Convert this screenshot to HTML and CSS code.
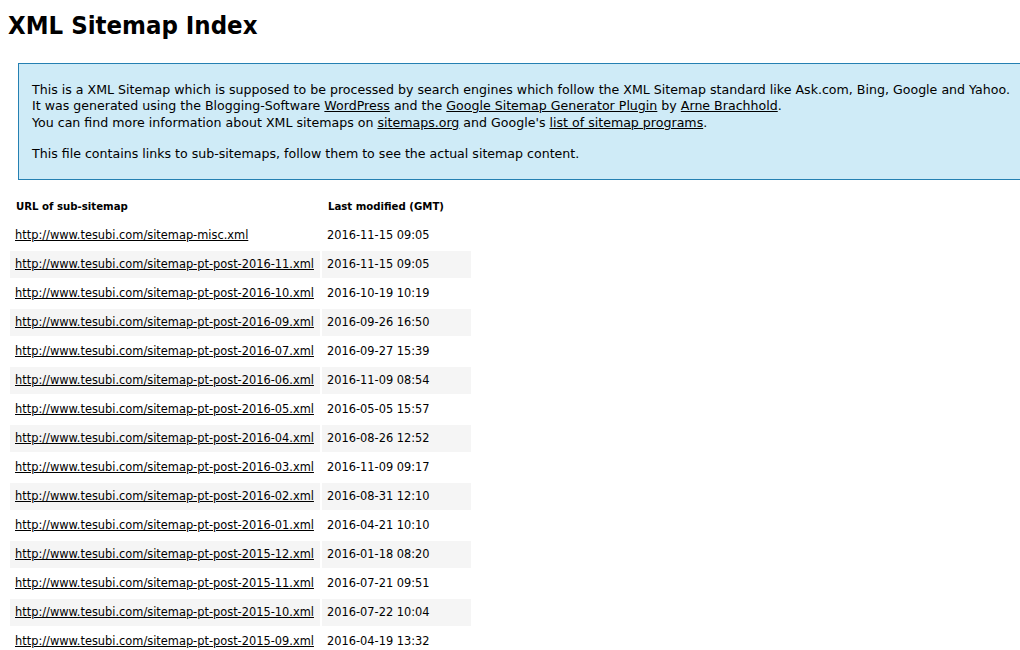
FILE: index.html
```html
<!DOCTYPE html>
<html lang="en">
<head>
  <meta charset="UTF-8" />
  <title>XML Sitemap</title>
  <link rel="stylesheet" href="styles.css">
</head>
<body>
  <h1>XML Sitemap Index</h1>

  <div id="intro">
    <p>
      This is a XML Sitemap which is supposed to be processed by search engines which follow the XML Sitemap standard like Ask.com, Bing, Google and Yahoo.<br />
      It was generated using the Blogging-Software <a href="#">WordPress</a> and the <a href="#">Google Sitemap Generator Plugin</a> by <a href="#">Arne Brachhold</a>.<br />
      You can find more information about XML sitemaps on <a href="#">sitemaps.org</a> and Google's <a href="#">list of sitemap programs</a>.
    </p>
    <p>This file contains links to sub-sitemaps, follow them to see the actual sitemap content.</p>
  </div>

  <div id="content">
    <table class="sitemap">
      <tr>
        <th>URL of sub-sitemap</th>
        <th>Last modified (GMT)</th>
      </tr>
      <tr>
        <td><a href="#">http://www.tesubi.com/sitemap-misc.xml</a></td>
        <td>2016-11-15 09:05</td>
      </tr>
      <tr class="high">
        <td><a href="#">http://www.tesubi.com/sitemap-pt-post-2016-11.xml</a></td>
        <td>2016-11-15 09:05</td>
      </tr>
      <tr>
        <td><a href="#">http://www.tesubi.com/sitemap-pt-post-2016-10.xml</a></td>
        <td>2016-10-19 10:19</td>
      </tr>
      <tr class="high">
        <td><a href="#">http://www.tesubi.com/sitemap-pt-post-2016-09.xml</a></td>
        <td>2016-09-26 16:50</td>
      </tr>
      <tr>
        <td><a href="#">http://www.tesubi.com/sitemap-pt-post-2016-07.xml</a></td>
        <td>2016-09-27 15:39</td>
      </tr>
      <tr class="high">
        <td><a href="#">http://www.tesubi.com/sitemap-pt-post-2016-06.xml</a></td>
        <td>2016-11-09 08:54</td>
      </tr>
      <tr>
        <td><a href="#">http://www.tesubi.com/sitemap-pt-post-2016-05.xml</a></td>
        <td>2016-05-05 15:57</td>
      </tr>
      <tr class="high">
        <td><a href="#">http://www.tesubi.com/sitemap-pt-post-2016-04.xml</a></td>
        <td>2016-08-26 12:52</td>
      </tr>
      <tr>
        <td><a href="#">http://www.tesubi.com/sitemap-pt-post-2016-03.xml</a></td>
        <td>2016-11-09 09:17</td>
      </tr>
      <tr class="high">
        <td><a href="#">http://www.tesubi.com/sitemap-pt-post-2016-02.xml</a></td>
        <td>2016-08-31 12:10</td>
      </tr>
      <tr>
        <td><a href="#">http://www.tesubi.com/sitemap-pt-post-2016-01.xml</a></td>
        <td>2016-04-21 10:10</td>
      </tr>
      <tr class="high">
        <td><a href="#">http://www.tesubi.com/sitemap-pt-post-2015-12.xml</a></td>
        <td>2016-01-18 08:20</td>
      </tr>
      <tr>
        <td><a href="#">http://www.tesubi.com/sitemap-pt-post-2015-11.xml</a></td>
        <td>2016-07-21 09:51</td>
      </tr>
      <tr class="high">
        <td><a href="#">http://www.tesubi.com/sitemap-pt-post-2015-10.xml</a></td>
        <td>2016-07-22 10:04</td>
      </tr>
      <tr>
        <td><a href="#">http://www.tesubi.com/sitemap-pt-post-2015-09.xml</a></td>
        <td>2016-04-19 13:32</td>
      </tr>
    </table>
  </div>
</body>
</html>
```

FILE: styles.css
```css
html {
  overflow: hidden;
  scrollbar-width: none;
}

html::-webkit-scrollbar,
body::-webkit-scrollbar {
  display: none;
}

body {
  margin: 0 0 8px 8px;
  font-family: "DejaVu Sans", Verdana, sans-serif;
  font-size: 12.6px;
  color: #000;
  background: #fff;
}

h1 {
  font-family: "DejaVu Sans Condensed", "DejaVu Sans", sans-serif;
  font-stretch: condensed;
  font-size: 25.5px;
  line-height: 30px;
  margin: 10px 0 23px 0;
}

#intro {
  background-color: #cfebf7;
  border: 1px solid #2580b2;
  border-right: none;
  padding: 5px 13px 3px 13px;
  margin: 10px 0 11px 10px;
  white-space: nowrap;
}

#intro p {
  line-height: 16.4px;
  margin: 13px 0;
}

#intro p + p {
  margin-top: 15px;
}

a {
  color: #000;
}

.sitemap {
  border-spacing: 2px;
}

.sitemap th {
  text-align: left;
  font-family: "DejaVu Sans Condensed", "DejaVu Sans", sans-serif;
  font-stretch: condensed;
  font-size: 11.3px;
  line-height: 13px;
  padding: 7px 27px 7px 6px;
}

.sitemap td {
  font-size: 11.4px;
  line-height: 13px;
  padding: 7px 6px 7px 5px;
}

.sitemap tr.high {
  background-color: whitesmoke;
}
```
